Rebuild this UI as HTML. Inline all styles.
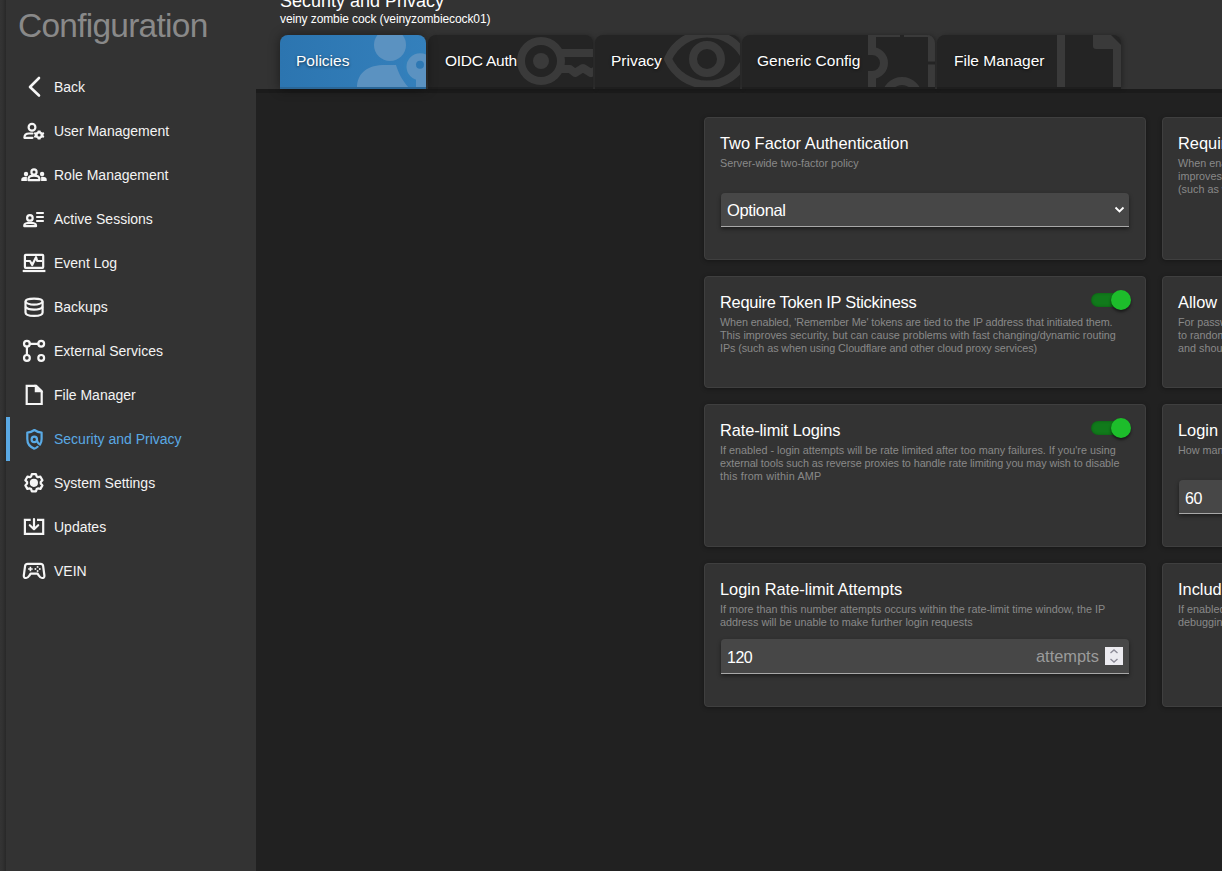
<!DOCTYPE html>
<html><head><meta charset="utf-8">
<style>
*{box-sizing:border-box;margin:0;padding:0}
html,body{width:1222px;height:871px;overflow:hidden;background:#212121;font-family:"Liberation Sans",sans-serif;color:#fff}
.a{position:absolute;white-space:nowrap}
#strip{position:absolute;left:0;top:0;width:6px;height:871px;background:linear-gradient(90deg,#343434 0%,#313131 45%,#282828 100%)}
#side{position:absolute;left:6px;top:0;width:250px;height:871px;background:#333333}
#title{left:18px;top:5.5px;font-size:33.5px;letter-spacing:-0.75px;color:#898989;line-height:40px}
.tx{left:48px;font-size:14px;color:#f4f4f4;line-height:16px}
.act{color:#5aa9e4}
#head{position:absolute;left:256px;top:0;width:966px;height:89px;background:#333333}
#h1{left:280px;top:-10px;font-size:18px;color:#fff;line-height:22px}
#h2{left:280px;top:12px;font-size:12px;letter-spacing:-0.1px;color:#fff;line-height:14px}
#band{position:absolute;left:256px;top:89px;width:966px;height:4px;background:#1b1b1b}
.tab{position:absolute;top:35px;height:54px;background:#242424;border-radius:8px 8px 0 0;overflow:hidden;box-shadow:2px 0 4px rgba(0,0,0,.25)}
.tab svg{position:absolute;top:-35px}
.tl{position:absolute;top:17px;font-size:15.5px;color:#fff;white-space:nowrap;line-height:18px;text-shadow:0 1px 3px rgba(0,0,0,.6)}
.tab.on{background:linear-gradient(90deg,#2c75b0,#3480bc);z-index:2;box-shadow:0 0 12px rgba(0,0,0,.45)}
.tab .bl{position:absolute;left:0;bottom:0;width:100%;height:2px;background:#1e1e1e}
.tab.on .bl{background:#2a6697}
.card{position:absolute;background:#333333;border:1px solid #3f3f3f;border-radius:4px;overflow:hidden;box-shadow:0 1px 4px rgba(0,0,0,.35)}
.ct{position:absolute;left:15px;top:16px;font-size:16.4px;color:#fff;white-space:nowrap;line-height:18px}
.cd{position:absolute;left:15px;top:39px;font-size:10.8px;line-height:13px;color:#898989;white-space:nowrap}
.inp{position:absolute;background:#474747;border-radius:4px 4px 0 0;border-bottom:1px solid #a8a8a8;box-shadow:0 2px 4px rgba(0,0,0,.45)}
.tog{position:absolute;width:44px;height:24px}
.tog .tr{position:absolute;left:0;top:3px;width:34px;height:14px;border-radius:7px;background:#117a1b;box-shadow:inset 0 0 3px rgba(0,0,0,.3)}
.tog .kn{position:absolute;left:20px;top:0;width:20px;height:20px;border-radius:50%;background:#1dbd2b;box-shadow:0 2px 3px rgba(0,0,0,.55)}
</style></head><body>
<div id="strip"></div>
<div id="side"></div>
<div class="a" id="title">Configuration</div>
<div class="a tx" style="left:54px;top:79px">Back</div>
<div class="a tx" style="left:54px;top:123px">User Management</div>
<div class="a tx" style="left:54px;top:167px">Role Management</div>
<div class="a tx" style="left:54px;top:211px">Active Sessions</div>
<div class="a tx" style="left:54px;top:255px">Event Log</div>
<div class="a tx" style="left:54px;top:299px">Backups</div>
<div class="a tx" style="left:54px;top:343px">External Services</div>
<div class="a tx" style="left:54px;top:387px">File Manager</div>
<div style="position:absolute;left:6px;top:417px;width:4px;height:44px;background:#5aa9e4"></div>
<div class="a tx act" style="left:54px;top:431px">Security and Privacy</div>
<div class="a tx" style="left:54px;top:475px">System Settings</div>
<div class="a tx" style="left:54px;top:519px">Updates</div>
<div class="a tx" style="left:54px;top:563px">VEIN</div>

<svg style="position:absolute;left:0;top:0" width="60" height="600" viewBox="0 0 60 600" fill="none" stroke="#f6f6f6" stroke-width="2.2" stroke-linecap="round" stroke-linejoin="round">
  <!-- back -->
  <path d="M39,78 L30,87 L39,95.5" stroke-width="2.6"/>
  <!-- user mgmt -->
  <circle cx="32" cy="127.2" r="3.4"/>
  <path d="M32.5,133.5 H29 C26,133.5 24.4,135.2 24.4,137.8 H32.5"/>
  <!-- gear small -->
  <g transform="translate(39.1,135)">
    <path d="M-1.3,-4.6 H1.3 L1.8,-3.2 L3.2,-2.4 L4.5,-2.8 L5.2,-1.4 L4.2,0 L5.2,1.4 L4.5,2.8 L3.2,2.4 L1.8,3.2 L1.3,4.6 H-1.3 L-1.8,3.2 L-3.2,2.4 L-4.5,2.8 L-5.2,1.4 L-4.2,0 L-5.2,-1.4 L-4.5,-2.8 L-3.2,-2.4 L-1.8,-3.2 Z" fill="#f6f6f6" stroke="none"/>
    <circle cx="0" cy="0" r="1.5" fill="#333" stroke="none"/>
  </g>
  <!-- role mgmt -->
  <circle cx="34" cy="171.9" r="2.6"/>
  <path d="M28.5,180.2 V178.8 C28.5,176.9 30.8,175.6 34,175.6 C37.2,175.6 39.4,176.9 39.4,178.8 V180.2 Z"/>
  <circle cx="26" cy="174" r="2.2" fill="#f6f6f6" stroke="none"/>
  <circle cx="42.1" cy="174" r="2.2" fill="#f6f6f6" stroke="none"/>
  <path d="M21.3,181 V179.5 C21.3,177.8 22.8,176.8 25.5,176.8 L26.9,176.8 L26.9,181 Z" fill="#f6f6f6" stroke="none"/>
  <path d="M46.7,181 V179.5 C46.7,177.8 45.2,176.8 42.5,176.8 L41.1,176.8 L41.1,181 Z" fill="#f6f6f6" stroke="none"/>
  <!-- active sessions -->
  <circle cx="29.9" cy="217.9" r="2.8"/>
  <path d="M24.3,226.2 V225.2 C24.3,223.6 26.5,222.8 30.1,222.8 C33.7,222.8 36,223.6 36,225.2 V226.2 Z"/>
  <path d="M36.2,213 H43.8 M36.2,217 H43.8 M36.2,221 H43.8" stroke-linecap="butt"/>
  <!-- event log -->
  <rect x="24.9" y="254.9" width="18.3" height="12.9" rx="0.8"/>
  <path d="M22.7,271 H45.4" stroke-linecap="butt"/>
  <path d="M26,261 H30 L32.2,265 L36,257.2 L37.2,261 H42.2" stroke-linecap="butt"/>
  <!-- backups db -->
  <path d="M25.5,301.5 C25.5,297.6 42.6,297.6 42.6,301.5 V312.5 C42.6,317 25.5,317 25.5,312.5 Z"/>
  <path d="M25.8,302 C28,305.5 40,305.5 42.3,302 M25.8,307.2 C28,310.5 40,310.5 42.3,307.2"/>
  <!-- external services -->
  <circle cx="26.9" cy="343.8" r="2.9"/>
  <circle cx="41.2" cy="343.8" r="2.9"/>
  <circle cx="26.9" cy="357.9" r="2.9"/>
  <circle cx="41.2" cy="357.9" r="2.9"/>
  <path d="M29.8,343.8 H38.3 M26.9,346.7 V355"/>
  <!-- file manager -->
  <path d="M26.7,385.8 H36.2 L41.7,391.3 V404 H26.7 Z" stroke-linejoin="miter"/>
  <path d="M35.5,386 V391.6 H41.5 Z" fill="#f6f6f6" stroke="#f6f6f6" stroke-width="1.5" stroke-linejoin="miter"/>
  <!-- security shield -->
  <g stroke="#5aabe6" transform="translate(0.6,0.6)">
    <path d="M37,446.2 C35.5,447.6 33.8,448 33.6,448 C29.5,446.5 26.7,443 26.7,438.5 V432 C29.5,431.8 31.8,430.8 33.8,429.4 C35.8,430.8 38.1,431.8 41,432 V438.5 C41,440.8 40.5,442.5 39.5,443.8"/>
    <circle cx="33.7" cy="438.8" r="2.7"/>
    <path d="M36.4,439.8 C36.6,441.8 37.8,443 39.4,443.8"/>
  </g>
  <!-- system settings gear -->
  <path d="M31.09,476.50 L31.90,474.13 L35.90,474.13 L36.71,476.50 L37.96,477.22 L40.41,476.73 L42.41,480.20 L40.76,482.08 L40.76,483.52 L42.41,485.40 L40.41,488.87 L37.96,488.38 L36.71,489.10 L35.90,491.47 L31.90,491.47 L31.09,489.10 L29.84,488.38 L27.39,488.87 L25.39,485.40 L27.04,483.52 L27.04,482.08 L25.39,480.20 L27.39,476.73 L29.84,477.22 Z" stroke-width="2.3"/>
  <circle cx="33.9" cy="482.8" r="4.1" fill="#f6f6f6" stroke="none"/>
  <!-- updates -->
  <path d="M30.7,519.9 H24.9 V533.9 H43.2 V519.9 H37" stroke-linecap="butt" stroke-linejoin="miter"/>
  <path d="M34,519 V529 M29.8,525.2 L34,529.2 L38.2,525.2"/>
  <!-- vein gamepad -->
  <path d="M27.5,563.8 H40.7 C42,563.8 42.8,564.6 43.1,565.8 L44.4,575.5 C44.7,577.6 43.3,578 42,578 C40.6,578 39.9,577.3 39,575.8 L37.6,573.6 H30.6 L29.2,575.8 C28.3,577.3 27.6,578 26.2,578 C24.9,578 23.5,577.6 23.8,575.5 L25.1,565.8 C25.4,564.6 26.2,563.8 27.5,563.8 Z"/>
  <path d="M28.1,569 H32.7 M30.4,566.7 V571.3" stroke-width="1.6" stroke-linecap="butt"/>
  <circle cx="37.6" cy="566.9" r="0.95" fill="#f6f6f6" stroke="none"/>
  <circle cx="37.6" cy="571" r="0.95" fill="#f6f6f6" stroke="none"/>
  <circle cx="35.4" cy="569" r="0.95" fill="#f6f6f6" stroke="none"/>
  <circle cx="39.8" cy="569" r="0.95" fill="#f6f6f6" stroke="none"/>
</svg>

<div id="head"></div>
<div class="a" id="h1">Security and Privacy</div>
<div class="a" id="h2">veiny zombie cock (veinyzombiecock01)</div>
<div id="band"></div>

<div class="tab on" style="left:280px;width:146px">
  <svg style="left:-280px" width="1222" height="100">
    <g fill="#5b92c1">
      <circle cx="390" cy="45" r="16"/>
      <path d="M357,88 C357,74 366,66 382,65 H396 C398.5,73 402.5,81 409,88 Z"/>
      <circle cx="420" cy="66.7" r="15" stroke="#3280bb" stroke-width="3"/>
      <rect x="416" y="72" width="11" height="16"/>
    </g>
    <circle cx="420" cy="64.8" r="4" fill="#2e78b3"/>
  </svg>
  <div class="tl" style="left:16px">Policies</div>
  <div class="bl"></div>
</div>
<div class="tab" style="left:428px;width:165px">
  <svg style="left:-428px" width="1222" height="100" fill="none" stroke="#3a3a3a" stroke-width="8">
    <circle cx="541" cy="61" r="20"/>
    <circle cx="541" cy="61" r="8" fill="#3a3a3a" stroke="none"/>
    <path d="M558,53 H600"/>
    <path d="M558,69 H570 L575,73 L583,68 L591,73 L600,68" stroke-linejoin="round"/>
  </svg>
  <div class="tl" style="left:17px;letter-spacing:-0.25px">OIDC Auth</div>
  <div class="bl"></div>
</div>
<div class="tab" style="left:595px;width:145px">
  <svg style="left:-595px" width="1222" height="100" fill="none" stroke="#3a3a3a" stroke-width="8">
    <path d="M668,59 A42.6,42.6 0 0 1 746,59 A42.6,42.6 0 0 1 668,59 Z" stroke-linejoin="round"/>
    <circle cx="707" cy="59" r="14"/>
  </svg>
  <div class="tl" style="left:16px">Privacy</div>
  <div class="bl"></div>
</div>
<div class="tab" style="left:742px;width:193px">
  <svg style="left:-742px" width="1222" height="100" fill="none" stroke="#3a3a3a" stroke-width="8">
    <path d="M872,30 V51 A12,12 0 0 1 872,75 V95"/>
    <path d="M872,33 H900 M904,33 H936"/>
    <path d="M932,30 V61.5 M932,64.5 V95"/>
    <circle cx="902" cy="97" r="16"/>
  </svg>
  <div class="tl" style="left:15px">Generic Config</div>
  <div class="bl"></div>
</div>
<div class="tab" style="left:937px;width:184px">
  <svg style="left:-937px" width="1222" height="100" fill="none" stroke="#3a3a3a" stroke-width="8">
    <path d="M1061,30 V95"/>
    <path d="M1117,45 V95"/>
    <path d="M1093,30 V46 A3,3 0 0 0 1096,49 H1125 L1106,30 Z" fill="#3a3a3a" stroke="none"/>
  </svg>
  <div class="tl" style="left:17px">File Manager</div>
  <div class="bl"></div>
</div>

<!-- column 1 -->
<div class="card" style="left:704px;top:117px;width:442px;height:143px">
  <div class="ct">Two Factor Authentication</div>
  <div class="cd">Server-wide two-factor policy</div>
  <div class="inp" style="left:16px;top:75px;width:408px;height:34px">
    <div class="a" style="left:6px;top:8px;font-size:16.5px;letter-spacing:-0.35px;color:#fff;line-height:18px">Optional</div>
    <svg style="position:absolute;left:393px;top:13px" width="12" height="9"><path d="M1.5,1.5 L5.5,5.5 L9.5,1.5" fill="none" stroke="#fff" stroke-width="1.8"/></svg>
  </div>
</div>
<div class="card" style="left:704px;top:276px;width:442px;height:112px">
  <div class="ct" style="letter-spacing:-0.26px">Require Token IP Stickiness</div>
  <div class="tog" style="left:386px;top:13px"><div class="tr"></div><div class="kn"></div></div>
  <div class="cd"><span style="letter-spacing:-0.1px">When enabled, 'Remember Me' tokens are tied to the IP address that initiated them.</span><br>This improves security, but can cause problems with fast changing/dynamic routing<br><span style="letter-spacing:-0.08px">IPs (such as when using Cloudflare and other cloud proxy services)</span></div>
</div>
<div class="card" style="left:704px;top:404px;width:442px;height:143px">
  <div class="ct" style="letter-spacing:-0.1px">Rate-limit Logins</div>
  <div class="tog" style="left:386px;top:13px"><div class="tr"></div><div class="kn"></div></div>
  <div class="cd">If enabled - login attempts will be rate limited after too many failures. If you're using<br><span style="letter-spacing:-0.06px">external tools such as reverse proxies to handle rate limiting you may wish to disable</span><br><span style="letter-spacing:0.18px">this from within AMP</span></div>
</div>
<div class="card" style="left:704px;top:563px;width:442px;height:144px">
  <div class="ct">Login Rate-limit Attempts</div>
  <div class="cd">If more than this number attempts occurs within the rate-limit time window, the IP<br>address will be unable to make further login requests</div>
  <div class="inp" style="left:16px;top:75px;width:408px;height:35px">
    <div class="a" style="left:6px;top:10px;font-size:16px;letter-spacing:-0.5px;color:#fff;line-height:18px">120</div>
    <div class="a" style="left:315px;top:8px;font-size:16.4px;color:#9b9b9b;line-height:18px">attempts</div>
    <div style="position:absolute;left:384px;top:8px;width:18px;height:18px;background:#ecebf0">
      <svg width="18" height="18"><path d="M5.5,6 L9,3 L12.5,6 M5.5,12 L9,15 L12.5,12" fill="none" stroke="#8c8a96" stroke-width="1.4"/></svg>
    </div>
  </div>
</div>

<!-- column 2 -->
<div class="card" style="left:1162px;top:117px;width:442px;height:143px">
  <div class="ct">Require Password Change</div>
  <div class="cd">When enabled, users will be required<br>improves security<br>(such as when</div>
</div>
<div class="card" style="left:1162px;top:276px;width:442px;height:112px">
  <div class="ct">Allow password reset</div>
  <div class="cd">For password reset<br>to random<br>and should</div>
</div>
<div class="card" style="left:1162px;top:404px;width:442px;height:143px">
  <div class="ct">Login Rate-limit Window</div>
  <div class="cd">How many seconds</div>
  <div class="inp" style="left:16px;top:75px;width:408px;height:34px">
    <div class="a" style="left:6px;top:10px;font-size:16px;letter-spacing:-0.5px;color:#fff;line-height:18px">60</div>
  </div>
</div>
<div class="card" style="left:1162px;top:563px;width:442px;height:144px">
  <div class="ct">Include debug</div>
  <div class="cd">If enabled<br>debugging</div>
</div>
</body></html>
